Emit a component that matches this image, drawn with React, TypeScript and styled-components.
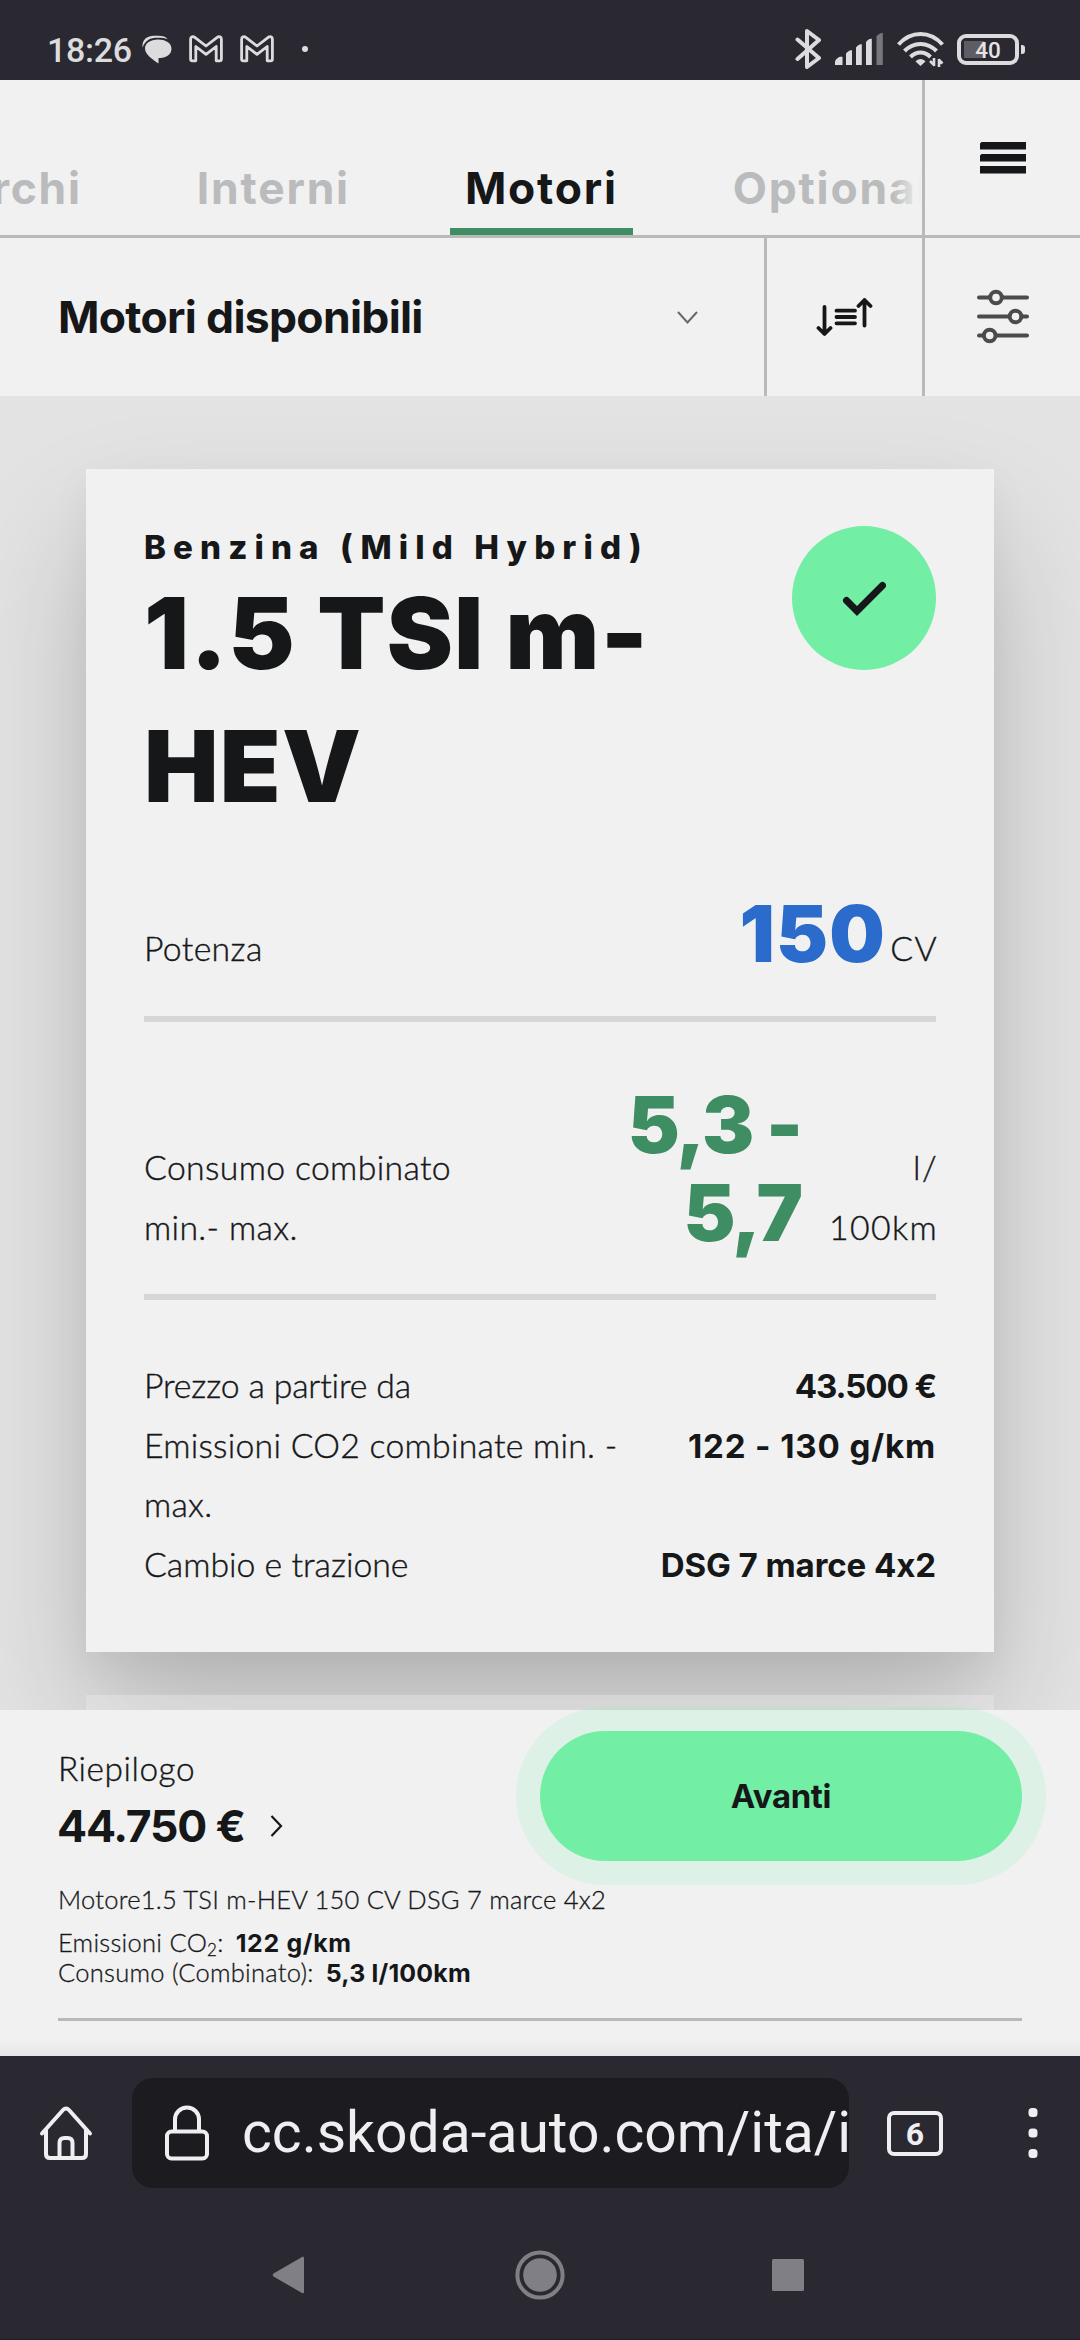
import React from "react";
import styled, { createGlobalStyle } from "styled-components";

const ink = "#151719";
const paper = "#f1f1f1";
const line = "#b8baba";
const chrome = "#2a2831";
const mint = "#72eea5";
const green = "#3f8d63";
const blue = "#2a6bcc";

const sans = `Inter, "Liberation Sans", sans-serif`;
const light = `Lato, "Open Sans", sans-serif`;
const system = `Roboto, "Liberation Sans", sans-serif`;

const GlobalStyle = createGlobalStyle`
  * { box-sizing: border-box; }
  body { margin: 0; background: ${chrome}; color: ${ink}; font-variant-ligatures: none; }
  svg { display: block; flex: none; }
  button { border: 0; padding: 0; margin: 0; background: none; color: inherit; font: inherit; }
`;

const Screen = styled.div`
  width: 1080px;
  height: 2340px;
  display: flex;
  flex-direction: column;
  overflow: hidden;
`;

/* ---------- system status bar ---------- */

const StatusBar = styled.div`
  height: 80px;
  flex: none;
  background: ${chrome};
  color: #dcdcde;
  display: flex;
  align-items: center;
  justify-content: space-between;
  padding: 18px 55px 0 47px;
`;

const StatusGroup = styled.div<{ $gap: number }>`
  display: flex;
  align-items: center;
  gap: ${(p) => p.$gap}px;
`;

const Clock = styled.span`
  width: 95px;
  font: 500 34px/40px ${system};
  letter-spacing: -0.3px;
  padding-top: 2px;
`;

const Dot = styled.i`
  width: 6px;
  height: 6px;
  margin-left: 11px;
  border-radius: 50%;
  background: #dcdcde;
`;

/* ---------- configurator header ---------- */

const Header = styled.header`
  height: 158px;
  flex: none;
  display: flex;
  background: ${paper};
  border-bottom: 3px solid ${line};
`;

const TabStrip = styled.nav`
  width: 922px;
  position: relative;
  display: flex;
  align-items: flex-end;
  overflow: hidden;
  &::after {
    content: "";
    position: absolute;
    right: 0;
    top: 0;
    width: 30px;
    height: 155px;
    background: linear-gradient(90deg, rgba(241, 241, 241, 0), ${paper});
  }
`;

const TabList = styled.div`
  display: flex;
  gap: 85px;
  margin-left: -86px;
`;

const Tab = styled.button<{ $active?: boolean }>`
  flex: none;
  padding: 0 15px 17px;
  border-bottom: 7px solid ${(p) => (p.$active ? green : "transparent")};
  color: ${(p) => (p.$active ? ink : "#b9bbbc")};
  font: 700 44.4px/45px ${sans};
  letter-spacing: 1.8px;
`;

const CellButton = styled.button`
  width: 158px;
  flex: none;
  display: grid;
  place-items: center;
  border-left: 3px solid ${line};
`;

const FilterBar = styled.div`
  height: 158px;
  flex: none;
  display: flex;
  background: ${paper};
`;

const Select = styled.button`
  flex: 1;
  display: flex;
  align-items: center;
  justify-content: space-between;
  padding: 0 66px 0 58px;
  font: 700 44.5px/60px ${sans};
  letter-spacing: -0.7px;
`;

/* ---------- engine cards ---------- */

const Main = styled.main`
  height: 1314px;
  flex: none;
  overflow: hidden;
  background: #e3e3e3;
  padding: 73px 86px 0;
  display: flex;
  flex-direction: column;
  gap: 43px;
`;

const Card = styled.article`
  flex: none;
  padding: 57px 58px 58px;
  background: ${paper};
  box-shadow: 0 70px 120px rgba(0, 0, 0, 0.19), 0 14px 36px rgba(0, 0, 0, 0.05);
`;

const NextCard = styled.div`
  flex: none;
  height: 200px;
  background: rgba(241, 241, 241, 0.34);
`;

const CardHead = styled.div`
  display: flex;
  justify-content: space-between;
`;

const Overline = styled.div`
  margin-top: 1px;
  font: 800 33.1px/40px ${sans};
  letter-spacing: 7.1px;
  white-space: nowrap;
`;

const Title = styled.h2`
  margin: 0;
  width: 560px;
  font: 900 99.4px/133px ${sans};
  letter-spacing: 1.3px;
`;

const CheckBadge = styled.div`
  width: 144px;
  height: 144px;
  flex: none;
  border-radius: 50%;
  background: ${mint};
  display: grid;
  place-items: center;
`;

const SpecRow = styled.div<{ $top: number; $bottom: number }>`
  display: flex;
  align-items: flex-end;
  padding: ${(p) => p.$top}px 0 ${(p) => p.$bottom}px;
  border-bottom: 6px solid #d6d6d6;
`;

const SpecLabel = styled.div`
  flex: 1;
  font: 300 33.8px/60px ${light};
  letter-spacing: 0.35px;
  -webkit-text-stroke: 0.4px ${ink};
`;

const SpecValue = styled.div<{ $color: string; $spacing: number }>`
  color: ${(p) => p.$color};
  font: 900 78.2px/88px ${sans};
  letter-spacing: ${(p) => p.$spacing}px;
  text-align: right;
`;

const SpecUnit = styled.div<{ $width: number }>`
  width: ${(p) => p.$width}px;
  margin-left: 4px;
  margin-right: -2px;
  font: 300 33.8px/60px ${light};
  letter-spacing: 1.4px;
  text-align: right;
  -webkit-text-stroke: 0.4px ${ink};
`;

const DetailList = styled.dl`
  margin: 56px 0 0;
`;

const DetailRow = styled.div`
  display: flex;
  justify-content: space-between;
  align-items: flex-start;
`;

const DetailTerm = styled.dt<{ $spacing: number }>`
  width: 500px;
  font: 300 33.8px/59.5px ${light};
  letter-spacing: ${(p) => p.$spacing}px;
  -webkit-text-stroke: 0.4px ${ink};
`;

const DetailValue = styled.dd<{ $spacing: number }>`
  margin: 0 0 -2px;
  font: 700 33.1px/61.5px ${sans};
  letter-spacing: ${(p) => p.$spacing}px;
  white-space: nowrap;
`;

/* ---------- summary footer ---------- */

const Footer = styled.footer`
  height: 346px;
  flex: none;
  padding: 21px 58px 0;
  background: linear-gradient(${paper} 328px, #e6e7e8 346px);
`;

const SummaryTop = styled.div`
  height: 130px;
  display: flex;
  justify-content: space-between;
`;

const Summary = styled.div`
  padding-top: 11px;
`;

const SummaryLabel = styled.div`
  font: 300 33.4px/52px ${light};
  letter-spacing: 0.55px;
  -webkit-text-stroke: 0.4px ${ink};
`;

const Price = styled.div`
  display: flex;
  align-items: center;
  gap: 25px;
  margin-left: -1px;
  font: 700 44.5px/64px ${sans};
  letter-spacing: -1.2px;
`;

const NextButton = styled.button`
  width: 482px;
  height: 130px;
  border-radius: 65px;
  background: ${mint};
  box-shadow: 0 0 0 24px rgba(115, 239, 166, 0.15);
  font: 700 32.9px/130px ${sans};
  letter-spacing: -0.3px;
`;

const EngineLine = styled.div`
  margin-top: 18px;
  font: 300 25.5px/40px ${light};
  letter-spacing: 0.24px;
  -webkit-text-stroke: 0.3px ${ink};
`;

const Facts = styled.div`
  margin-top: 8px;
  padding-bottom: 31px;
  border-bottom: 3px solid ${line};
`;

const Fact = styled.div`
  height: 30px;
  display: flex;
  align-items: baseline;
  gap: 12px;
  font: 300 25.5px/30px ${light};
  letter-spacing: 0.27px;
  -webkit-text-stroke: 0.3px ${ink};
  sub {
    font-size: 17px;
    line-height: 0;
    vertical-align: -4px;
  }
`;

const FactValue = styled.b<{ $spacing: number }>`
  font: 700 24.9px/30px ${sans};
  letter-spacing: ${(p) => p.$spacing}px;
  -webkit-text-stroke: 0;
`;

/* ---------- browser chrome ---------- */

const BrowserBar = styled.div`
  height: 154px;
  flex: none;
  background: ${chrome};
  color: #efeef1;
  display: grid;
  grid-template-columns: 132px 717px 132px 103px;
  align-items: center;
  justify-items: center;
`;

const UrlBox = styled.div`
  width: 717px;
  height: 110px;
  border-radius: 21px;
  background: #1c1b20;
  overflow: hidden;
  display: flex;
  align-items: center;
  gap: 31px;
  padding-left: 31px;
  font: 400 57px/70px ${system};
  white-space: nowrap;
`;

const TabCount = styled.div`
  width: 56px;
  height: 45px;
  border: 4px solid #efeef1;
  border-radius: 7px;
  text-align: center;
  font: 700 32px/38px ${system};
`;

const SystemNav = styled.div`
  height: 130px;
  flex: none;
  background: ${chrome};
  border-bottom: 1px solid #1d1c22;
  display: flex;
  align-items: center;
  justify-content: space-between;
  padding: 1px 276px 0 272px;
`;

/* ---------- icons ---------- */

const GmailIcon = () => (
  <svg width="34" height="28" viewBox="0 0 34 28" fill="none" stroke="#dcdcde" strokeWidth="2.8" strokeLinejoin="round">
    <path d="M1.6 24V4.2C1.6 1.8 4 1 5.8 2.4L17 11 28.200 2.400C30 1 32.400 1.800 32.400 4.200V24c0 1-.6 1.800-1.800 1.800H27.200V11.500L17 19.400 6.800 11.500V25.800H3.400C2.200 25.800 1.600 25 1.600 24z" />
  </svg>
);

const MessageIcon = () => (
  <svg width="30" height="29" viewBox="0 0 30 29" fill="#dcdcde">
    <path d="M16 4.500c7.600 0 13.500 3.400 13.500 9.300 0 6-5.600 9-11 9.200H16.500V28.500C10.500 24.500 3 19.500 3 13.500 3 8 8.500 4.500 16 4.500z" />
    <path d="M.6 12.500C-.4 5 5 .8 12 .8h4.500c4.200 0 7.500 1 9 3.400C20 2.200 10 2.400 6.500 4.700 3.800 6.400 1.800 9 .6 12.500z" />
  </svg>
);

const BluetoothIcon = () => (
  <svg width="27" height="42" viewBox="0 0 27 42" fill="none" stroke="#dcdcde" strokeWidth="4" strokeLinejoin="round" strokeLinecap="round">
    <path d="M2.500 11.500 24 30 12 39V3l12 9L2.500 31" />
  </svg>
);

const SignalIcon = () => (
  <svg width="49" height="32" viewBox="0 0 49 32" fill="#dcdcde">
    <path d="M0 32v-3c0-2 3-4.500 5-5.200h2.500V32zM11 32V20.500c1.500-2 3.500-3 5-3.200h1V32zM21 32V14.500c1.500-2 3-3 5-3.200h.8V32zM31 32V9c1.500-2 3-3 5-3.200h.8V32z" />
    <path d="M41.500 32V3.500C43 1.500 44.500.4 46.500 0h1.300v32z" fill="#77767c" />
  </svg>
);

const WifiIcon = () => (
  <svg width="47" height="36" viewBox="0 0 47 36" fill="none" stroke="#dcdcde" strokeWidth="4">
    <path d="M1.500 13.500C14-.5 33-.5 45.500 13.500" />
    <path d="M7.500 20c9-9.500 23-9.500 32 0" />
    <path d="M13.500 26c6-6 14-6 20 0" />
    <path d="M18.500 30.500c2.500-3.500 7.500-3.500 10 0l-5 4.500z" fill="#dcdcde" stroke="none" />
    <path d="M37 27v8M37.500 34.500 33 30M42 36v-8M41.500 28.500l4 4" strokeWidth="2.600" />
  </svg>
);

const BatteryShell = styled.div`
  position: relative;
  width: 62px;
  height: 31px;
  margin-right: 6px;
  border: 4px solid #dcdcde;
  border-radius: 9px;
  background: linear-gradient(90deg, #5e5d63 20px, transparent 20px) no-repeat 3px 3px / 48px 17px;
  text-align: center;
  font: 500 22.500px/25px ${system};
  color: #e4e4e6;
  &::after {
    content: "";
    position: absolute;
    right: -10px;
    top: 7px;
    width: 4px;
    height: 9px;
    border-radius: 0 3px 3px 0;
    background: #dcdcde;
  }
`;

const MenuIcon = () => (
  <svg width="46" height="32" viewBox="0 0 46 32" fill={ink}>
    <path d="M1.500 0H46v7.500H0V1.500zM1.500 12H46v7.500H0v-6zM0 24h46v7.500H0z" />
  </svg>
);

const ChevronDown = () => (
  <svg width="21" height="13" viewBox="0 0 21 13" fill="none" stroke="#66686a" strokeWidth="2">
    <path d="M1 1l9.500 10.500L20 1" />
  </svg>
);

const SortIcon = () => (
  <svg width="58" height="40" viewBox="0 0 58 40" fill="none" stroke={ink} strokeWidth="3.800" strokeLinecap="round" strokeLinejoin="round">
    <path d="M8.500 10v26.500M2.500 31l6 6 6-6M48.500 28.500V3M42.500 9l6-6 6 6" />
    <path d="M20.500 13.700h18.500M20.500 20h18.500M20.500 26.300h18.500" />
  </svg>
);

const SlidersIcon = () => (
  <svg width="52" height="56" viewBox="0 0 52 56" fill="none" stroke="#4a4b4c" strokeWidth="4" strokeLinecap="round">
    <path d="M2 8.500h11M26 8.500h24M2 27.500h30M45 27.500h5M2 46.500h4M20 46.500h30" />
    <circle cx="19" cy="8.500" r="5.800" />
    <circle cx="38.500" cy="27.500" r="5.800" />
    <circle cx="12.700" cy="46.500" r="5.800" />
  </svg>
);

const CheckIcon = () => (
  <svg width="44" height="36" viewBox="0 0 44 36" fill="none" stroke={ink} strokeWidth="7" strokeLinecap="round">
    <path d="M4.500 20.500 15 31 40.500 5.500" />
  </svg>
);

const ChevronRight = () => (
  <svg width="13" height="22" viewBox="0 0 13 22" fill="none" stroke={ink} strokeWidth="2.200">
    <path d="M1.500 1l9.500 10-9.500 10" />
  </svg>
);

const HomeIcon = () => (
  <svg width="54" height="56" viewBox="0 0 54 56" fill="none" stroke="#efeef1" strokeWidth="4" strokeLinecap="round" strokeLinejoin="round">
    <path d="M3 28.500 24 5q3-3.200 6 0l21 23.500M7 25v24q0 4 4 4h32q4 0 4-4V25" />
    <path d="M20.500 53V38q0-5 5-5h3q5 0 5 5v15" />
  </svg>
);

const LockIcon = () => (
  <svg width="48" height="60" viewBox="0 0 48 60" fill="none" stroke="#efeef1" strokeWidth="4">
    <path d="M12 28V16.500a12 12 0 0 1 24 0V28" />
    <rect x="4" y="28.500" width="40" height="27" rx="4.500" />
  </svg>
);

const DotsIcon = () => (
  <svg width="10" height="52" viewBox="0 0 10 52" fill="#efeef1">
    <rect x=".5" y="1" width="9" height="9" rx="3.500" />
    <rect x=".5" y="21.500" width="9" height="9" rx="3.500" />
    <rect x=".5" y="42" width="9" height="9" rx="3.500" />
  </svg>
);

const BackIcon = () => (
  <svg width="36" height="38" viewBox="0 0 36 38" fill="#807f85">
    <path d="M32 2v34c0 1.200-1 1.600-2 1L1.500 20.500q-1.500-1.500 0-3L30 1c1-.6 2-.2 2 1z" />
  </svg>
);

const CircleIcon = () => (
  <svg width="50" height="50" viewBox="0 0 50 50" fill="#807f85">
    <circle cx="25" cy="25" r="22.600" fill="none" stroke="#807f85" strokeWidth="4" />
    <circle cx="25" cy="25" r="16.800" />
  </svg>
);

const SquareIcon = () => (
  <svg width="32" height="32" viewBox="0 0 32 32" fill="#807f85">
    <rect width="32" height="32" rx="1.500" />
  </svg>
);

/* ---------- data ---------- */

const tabs = ["Cerchi", "Interni", "Motori", "Optional"];

const details = [
  { term: "Prezzo a partire da", termSpacing: -0.15, value: "43.500 €", spacing: -1.1 },
  { term: "Emissioni CO2 combinate min. - max.", termSpacing: 0.25, value: "122 - 130 g/km", spacing: 0.87 },
  { term: "Cambio e trazione", termSpacing: 0, value: "DSG 7 marce 4x2", spacing: -0.1 },
];

export default function App() {
  return (
    <Screen>
      <GlobalStyle />
      <StatusBar>
        <StatusGroup $gap={17}>
          <StatusGroup $gap={0}>
            <Clock>18:26</Clock>
            <MessageIcon />
          </StatusGroup>
          <GmailIcon />
          <GmailIcon />
          <Dot />
        </StatusGroup>
        <StatusGroup $gap={13}>
          <BluetoothIcon />
          <SignalIcon />
          <WifiIcon />
          <BatteryShell>40</BatteryShell>
        </StatusGroup>
      </StatusBar>

      <Header>
        <TabStrip>
          <TabList>
            {tabs.map((t) => (
              <Tab key={t} $active={t === "Motori"}>
                {t}
              </Tab>
            ))}
          </TabList>
        </TabStrip>
        <CellButton aria-label="Menu">
          <MenuIcon />
        </CellButton>
      </Header>

      <FilterBar>
        <Select>
          Motori disponibili
          <ChevronDown />
        </Select>
        <CellButton aria-label="Ordina">
          <SortIcon />
        </CellButton>
        <CellButton aria-label="Filtri">
          <SlidersIcon />
        </CellButton>
      </FilterBar>

      <Main>
        <Card>
          <CardHead>
            <div>
              <Overline>Benzina (Mild Hybrid)</Overline>
              <Title>1.5 TSI m-HEV</Title>
            </div>
            <CheckBadge>
              <CheckIcon />
            </CheckBadge>
          </CardHead>
          <SpecRow $top={57} $bottom={38}>
            <SpecLabel>Potenza</SpecLabel>
            <SpecValue $color={blue} $spacing={1.2}>
              150
            </SpecValue>
            <SpecUnit $width={48}>CV</SpecUnit>
          </SpecRow>
          <SpecRow $top={59} $bottom={37}>
            <SpecLabel>
              Consumo combinato
              <br />
              min.- max.
            </SpecLabel>
            <SpecValue $color={green} $spacing={-2}>
              5,3 -<br />
              5,7
            </SpecValue>
            <SpecUnit $width={133}>
              l/
              <br />
              100km
            </SpecUnit>
          </SpecRow>
          <DetailList>
            {details.map((d) => (
              <DetailRow key={d.term}>
                <DetailTerm $spacing={d.termSpacing}>{d.term}</DetailTerm>
                <DetailValue $spacing={d.spacing}>{d.value}</DetailValue>
              </DetailRow>
            ))}
          </DetailList>
        </Card>
        <NextCard />
      </Main>

      <Footer>
        <SummaryTop>
          <Summary>
            <SummaryLabel>Riepilogo</SummaryLabel>
            <Price>
              44.750 €
              <ChevronRight />
            </Price>
          </Summary>
          <NextButton>Avanti</NextButton>
        </SummaryTop>
        <EngineLine>Motore1.5 TSI m-HEV 150 CV DSG 7 marce 4x2</EngineLine>
        <Facts>
          <Fact>
            <span>
              Emissioni CO<sub>2</sub>:
            </span>
            <FactValue $spacing={0.7}>122 g/km</FactValue>
          </Fact>
          <Fact>
            <span>Consumo (Combinato):</span>
            <FactValue $spacing={0.2}>5,3 l/100km</FactValue>
          </Fact>
        </Facts>
      </Footer>

      <BrowserBar>
        <HomeIcon />
        <UrlBox>
          <LockIcon />
          <span>cc.skoda-auto.com/ita/i</span>
        </UrlBox>
        <TabCount>6</TabCount>
        <DotsIcon />
      </BrowserBar>
      <SystemNav>
        <BackIcon />
        <CircleIcon />
        <SquareIcon />
      </SystemNav>
    </Screen>
  );
}
